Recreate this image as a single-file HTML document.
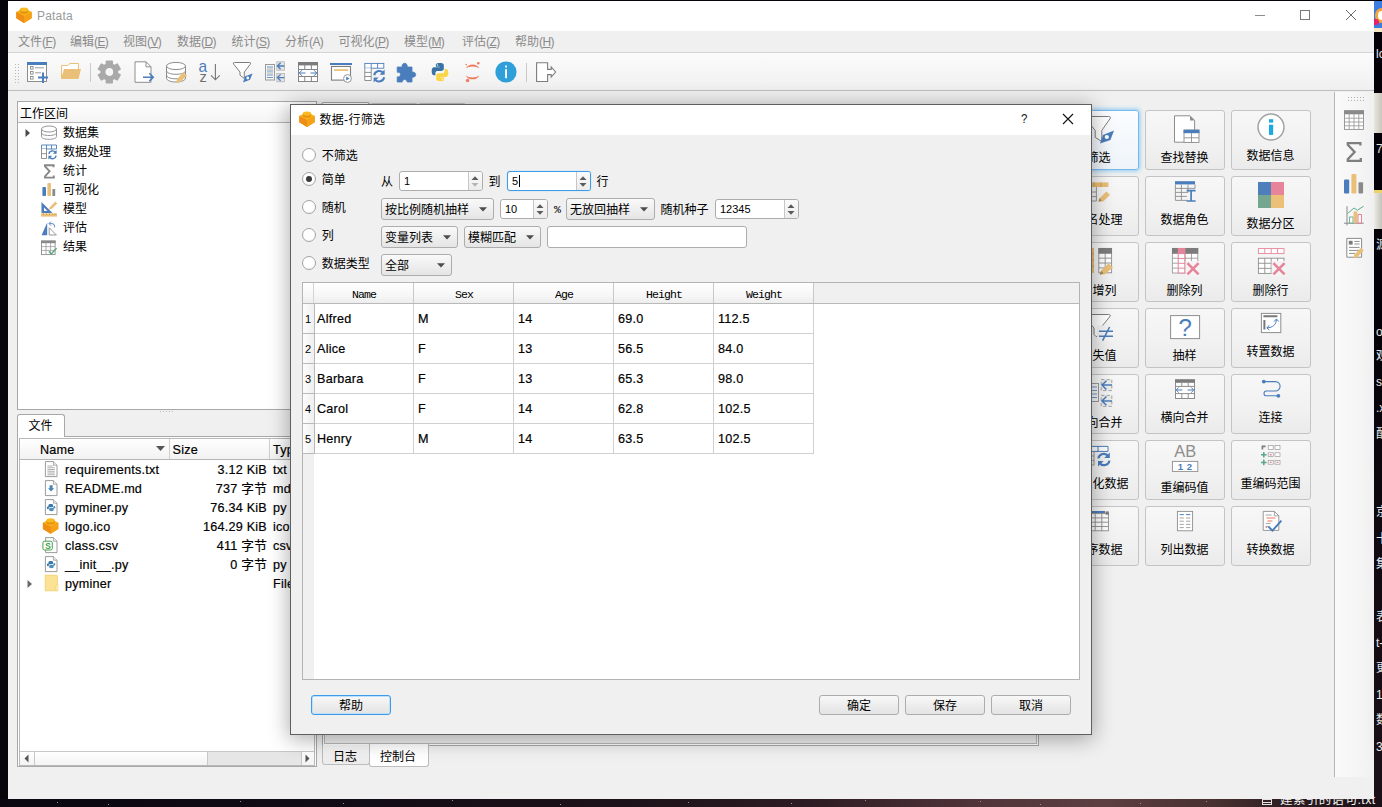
<!DOCTYPE html>
<html lang="zh"><head><meta charset="utf-8"><title>Patata</title>
<style>
html,body{margin:0;padding:0}
body{width:1382px;height:807px;overflow:hidden;position:relative;background:#07050c;
 font-family:"Liberation Sans","Noto Sans CJK SC",sans-serif;font-size:12px;color:#000}
div,span,svg{position:absolute;box-sizing:border-box}
.t{white-space:nowrap;line-height:16px;height:16px}
.m{font-family:"Liberation Serif","Noto Sans CJK SC",serif;letter-spacing:.6px}
.se{font-size:12.6px;letter-spacing:.25px;-webkit-text-stroke:.2px #000}
.d{font-size:11px}
.mo{font-family:"Liberation Mono",monospace;font-size:11.5px;letter-spacing:-.9px}
.btn{border:1px solid #adadad;border-radius:3px;background:linear-gradient(#f8f8f8,#ececec 55%,#e4e4e4)}
.cmb{border:1px solid #adadad;border-radius:3px;background:linear-gradient(#f9f9f9,#efefef 50%,#e5e5e5)}
.inp{border:1px solid #adadad;border-radius:3px;background:#fff}
.gb{border:1px solid #c4c4c4;border-radius:3px;background:linear-gradient(#f7f7f7,#f1f1f1 60%,#ebebeb)}
.gl{width:79px;text-align:center;left:-1px;font-size:12px;line-height:16px;height:16px;white-space:nowrap}
</style></head>
<body>
<div style="left:0px;top:799px;width:1382px;height:8px;background:linear-gradient(90deg,#0a0710,#120c16 25%,#1d1219 45%,#2c1b22 58%,#4e3338 70%,#5d3f42 80%,#47302f 88%,#2a1b20 94%,#1a1016)"></div>
<div style="left:452px;top:800px;width:1px;height:1px;background:#9a8fa8"></div>
<div style="left:343px;top:803px;width:1px;height:1px;background:#9a8fa8"></div>
<div style="left:108px;top:804px;width:1px;height:1px;background:#9a8fa8"></div>
<div style="left:688px;top:802px;width:1px;height:1px;background:#9a8fa8"></div>
<div style="left:791px;top:803px;width:1px;height:1px;background:#9a8fa8"></div>
<div style="left:980px;top:801px;width:1px;height:1px;background:#9a8fa8"></div>
<div style="left:1140px;top:803px;width:1px;height:1px;background:#9a8fa8"></div>
<div style="left:1206px;top:801px;width:1px;height:1px;background:#9a8fa8"></div>
<div style="left:57px;top:802px;width:1px;height:1px;background:#9a8fa8"></div>
<div style="left:240px;top:801px;width:1px;height:1px;background:#9a8fa8"></div>
<div style="left:560px;top:804px;width:1px;height:1px;background:#9a8fa8"></div>
<div style="left:865px;top:800px;width:1px;height:1px;background:#9a8fa8"></div>
<div style="left:1040px;top:804px;width:1px;height:1px;background:#9a8fa8"></div>
<div style="left:1374px;top:0px;width:8px;height:807px;background:linear-gradient(#040208,#040208 40%,#120a12 70%,#1c1018)"></div>
<div style="left:1374px;top:1px;width:8px;height:28px;background:#3c7ce0"></div>
<div style="left:1375px;top:8px;width:14px;height:15px;background:#fff;border:3px solid #f4a63a;border-radius:8px"></div>
<div style="left:1374px;top:19px;width:5px;height:6px;background:#e8206a;border-radius:0 3px 3px 0"></div>
<div style="left:1374px;top:28px;width:8px;height:4px;background:#f3e6c4"></div>
<div style="left:1374px;top:93px;width:8px;height:40px;background:linear-gradient(90deg,#e9e6dc,#c9c6bd)"></div>
<div style="left:1374px;top:190px;width:8px;height:39px;background:linear-gradient(90deg,#ecebe6,#c4c2bb);border-top:3px solid #ecd268"></div>
<span class="t" style="left:1376px;top:45.5px;color:#e8e8e8;font-size:12px">lc</span>
<span class="t" style="left:1376px;top:140.7px;color:#e8e8e8;font-size:12px">72</span>
<span class="t" style="left:1376px;top:236.6px;color:#e8e8e8;font-size:12px">源</span>
<span class="t" style="left:1376px;top:323.5px;color:#e8e8e8;font-size:12px">o.</span>
<span class="t" style="left:1376px;top:348px;color:#e8e8e8;font-size:12px">观</span>
<span class="t" style="left:1376px;top:374px;color:#e8e8e8;font-size:12px">sx</span>
<span class="t" style="left:1376px;top:400px;color:#e8e8e8;font-size:12px">.x</span>
<span class="t" style="left:1376px;top:426px;color:#e8e8e8;font-size:12px">配</span>
<span class="t" style="left:1376px;top:503.7px;color:#e8e8e8;font-size:12px">京</span>
<span class="t" style="left:1376px;top:530.5px;color:#e8e8e8;font-size:12px">十</span>
<span class="t" style="left:1376px;top:556px;color:#e8e8e8;font-size:12px">集</span>
<span class="t" style="left:1376px;top:608.8px;color:#e8e8e8;font-size:12px">表</span>
<span class="t" style="left:1376px;top:635px;color:#e8e8e8;font-size:12px">t-</span>
<span class="t" style="left:1376px;top:660px;color:#e8e8e8;font-size:12px">更</span>
<span class="t" style="left:1376px;top:687px;color:#e8e8e8;font-size:12px">16</span>
<span class="t" style="left:1376px;top:712px;color:#e8e8e8;font-size:12px">数</span>
<span class="t" style="left:1376px;top:738.5px;color:#e8e8e8;font-size:12px">31</span>
<div style="left:1262px;top:799px;width:10px;height:8px;overflow:hidden"><div style="left:0;top:-6px;width:10px;height:12px;border:1px solid #e4e4e4;border-top:0;background:repeating-linear-gradient(#e4e4e4 0 1px,transparent 1px 3px)"></div></div>
<span class="t" style="left:1280px;top:791.5px;color:#f2f2f2;font-size:12.5px;letter-spacing:.4px">建索引的语句.txt</span>
<div style="left:8px;top:1px;width:1366px;height:798px;background:#f0f0f0"></div>
<div style="left:8px;top:1px;width:1366px;height:30px;background:#fff"></div>
<svg style="left:16px;top:7px" width="16" height="16" viewBox="0 0 16 16"><path d="M8 1.4L15.7 5V11.3L8 15.9L0.3 11.3V5Z" fill="#f29a14"/><path d="M8 1.4L15.7 5L8 8.9L0.3 5Z" fill="#f7b51d"/><path d="M8 8.9L15.7 5V11.3L8 15.9Z" fill="#f5a216"/><path d="M8 8.9L0.3 5V11.3L8 15.9Z" fill="#ee8e14"/><path d="M3.8 2.5V4.7A4.2 2 0 0 0 12.2 4.7V2.5Z" fill="#e9940f"/><ellipse cx="8" cy="2.5" rx="4.2" ry="2" fill="#f8bb22"/></svg>
<span class="t" style="left:37px;top:8px;color:#9a9a9a;font-size:12px;letter-spacing:.2px">Patata</span>
<div style="left:1255px;top:15px;width:10px;height:1px;background:#8c8c8c"></div>
<div style="left:1300px;top:10px;width:10px;height:10px;border:1px solid #7a7a7a"></div>
<svg style="left:1345px;top:9px" width="12" height="12" viewBox="0 0 12 12"><path d="M1 1L11 11M11 1L1 11" stroke="#6a6a6a" stroke-width="1" fill="none"/></svg><div style="left:8px;top:31px;width:1366px;height:21px;background:#f0f0f0"></div>
<div style="left:8px;top:52px;width:1366px;height:1px;background:#d4d4d4"></div>
<span class="t" style="left:18px;top:34px;color:#8a8a8a;font-size:12px">文件<span style="position:static;font-size:12px;letter-spacing:-.6px">(<u>F</u>)</span></span>
<span class="t" style="left:70px;top:34px;color:#8a8a8a;font-size:12px">编辑<span style="position:static;font-size:12px;letter-spacing:-.6px">(<u>E</u>)</span></span>
<span class="t" style="left:123px;top:34px;color:#8a8a8a;font-size:12px">视图<span style="position:static;font-size:12px;letter-spacing:-.6px">(<u>V</u>)</span></span>
<span class="t" style="left:177px;top:34px;color:#8a8a8a;font-size:12px">数据<span style="position:static;font-size:12px;letter-spacing:-.6px">(<u>D</u>)</span></span>
<span class="t" style="left:231.5px;top:34px;color:#8a8a8a;font-size:12px">统计<span style="position:static;font-size:12px;letter-spacing:-.6px">(<u>S</u>)</span></span>
<span class="t" style="left:285px;top:34px;color:#8a8a8a;font-size:12px">分析<span style="position:static;font-size:12px;letter-spacing:-.6px">(A)</span></span>
<span class="t" style="left:338.5px;top:34px;color:#8a8a8a;font-size:12px">可视化<span style="position:static;font-size:12px;letter-spacing:-.6px">(<u>P</u>)</span></span>
<span class="t" style="left:404px;top:34px;color:#8a8a8a;font-size:12px">模型<span style="position:static;font-size:12px;letter-spacing:-.6px">(<u>M</u>)</span></span>
<span class="t" style="left:462px;top:34px;color:#8a8a8a;font-size:12px">评估<span style="position:static;font-size:12px;letter-spacing:-.6px">(<u>Z</u>)</span></span>
<span class="t" style="left:515px;top:34px;color:#8a8a8a;font-size:12px">帮助<span style="position:static;font-size:12px;letter-spacing:-.6px">(<u>H</u>)</span></span>
<div style="left:8px;top:53px;width:1366px;height:37px;background:linear-gradient(#fbfbfb,#f6f6f6 50%,#efefef)"></div>
<div style="left:8px;top:90px;width:1366px;height:1px;background:#bdbdbd"></div>
<div style="left:14px;top:63px;width:5px;height:20px;background-image:radial-gradient(circle,#b8b8b8 0.7px,transparent 0.9px);background-size:3px 3px"></div>
<div style="left:90px;top:63px;width:1px;height:19px;background:#c9c9c9"></div>
<div style="left:526px;top:63px;width:1px;height:19px;background:#c9c9c9"></div>
<svg style="left:0;top:53px" width="600" height="37" viewBox="0 53 600 37"><rect x="27.5" y="62.5" width="19" height="19" fill="#fff" stroke="#8c8c8c"/><rect x="27" y="62" width="20" height="3" fill="#4a7dbb"/><rect x="30.5" y="66.5" width="2.6" height="2.6" fill="none" stroke="#8c8c8c" stroke-width=".9"/><rect x="30.5" y="71.5" width="2.6" height="2.6" fill="none" stroke="#8c8c8c" stroke-width=".9"/><rect x="30.5" y="76.5" width="2.6" height="2.6" fill="none" stroke="#8c8c8c" stroke-width=".9"/><path d="M35 67.8H44M35 72.8H41" stroke="#9a9a9a" stroke-width="1"/><path d="M38 77.5H48M43 72.5V83" stroke="#4a7dbb" stroke-width="2"/><path d="M61.5 78.5V65.5H67.5L70 63.5H78.5V69" fill="#fff" stroke="#eabf78" stroke-width="1"/><path d="M61 79L64 69H81L78.5 79Z" fill="#eabf78"/><path d="M106.41 64.33L106.42 61.18L112.18 61.18L112.19 64.33L114.50 65.66L117.23 64.09L120.11 69.08L117.39 70.66L117.39 73.34L120.11 74.92L117.23 79.91L114.50 78.34L112.19 79.67L112.18 82.82L106.42 82.82L106.41 79.67L104.10 78.34L101.37 79.91L98.49 74.92L101.21 73.34L101.21 70.66L98.49 69.08L101.37 64.09L104.10 65.66ZM114.0 72A4.7 4.7 0 1 0 104.6 72A4.7 4.7 0 1 0 114.0 72Z" fill="#a9a9a9" fill-rule="evenodd" stroke="#a9a9a9" stroke-width="1.6" stroke-linejoin="round"/><path d="M135 61.8H146L151 66.8V82.3H135Z" fill="#fff" stroke="#8e8e8e" stroke-width="1"/><path d="M146 61.8V66.8H151" fill="none" stroke="#8e8e8e"/><path d="M143 77.2H153M149.3 73.3L153.3 77.2L149.3 81.1" fill="none" stroke="#4a7dbb" stroke-width="1.5"/><path d="M166.5 66V78C166.5 80.5 171 82 176 82S185.5 80.5 185.5 78V66" fill="#fff" stroke="#8c8c8c"/><ellipse cx="176" cy="66" rx="9.5" ry="3.6" fill="#fff" stroke="#8c8c8c"/><path d="M166.5 70.5C166.5 73 171 74.3 176 74.3S185.5 73 185.5 70.5M166.5 75C166.5 77.5 171 78.8 176 78.8S185.5 77.5 185.5 75" fill="none" stroke="#8c8c8c"/><path d="M176.2 82.8L177.2 78.8L183.6 72.2L187 75.6L180.4 82Z" fill="#eabf78"/><text x="198.4" y="71.7" font-family="Liberation Sans,sans-serif" font-size="17" textLength="8.6" lengthAdjust="spacingAndGlyphs" fill="#4a7dbb">a</text><text x="199.4" y="81.9" font-family="Liberation Sans,sans-serif" font-size="14.6" fill="#6f6f6f">z</text><path d="M215.4 64V79.6M211 75.4L215.4 79.8L219.8 75.4" fill="none" stroke="#767676" stroke-width="1.1"/><path d="M234.5 62.5H249.5Q251.5 62.5 250.2 64.3L244.3 72V78.5L240 75.2V72L233.8 64.3Q232.5 62.5 234.5 62.5Z" fill="#fff" stroke="#7d7d7d" stroke-width="1"/><path d="M243 82.4L245.2 76.2L252.6 73.4L250 79.8Z" fill="#4a7dbb"/><circle cx="247.8" cy="78" r="1.4" fill="#fff"/><rect x="265.5" y="64.5" width="9" height="15.5" fill="#f4f4f4" stroke="#9a9a9a"/><path d="M267 67H273M267 71H273M267 75H273M267 77.5H273" stroke="#6f97c8" stroke-width="1"/><path d="M267 69H273M267 73H273" stroke="#b0b0b0"/><rect x="276.8" y="61.8" width="7.8" height="8.4" fill="#e4e4e4" stroke="#b5b5b5" stroke-width=".8"/><path d="M277.4 66.0H284.4M280.6 62.8L277.4 66.0L280.6 69.2" fill="none" stroke="#4a7dbb" stroke-width="1.3"/><rect x="276.8" y="73.4" width="7.8" height="8.4" fill="#e4e4e4" stroke="#b5b5b5" stroke-width=".8"/><path d="M277.4 77.60000000000001H284.4M280.6 74.4L277.4 77.60000000000001L280.6 80.80000000000001" fill="none" stroke="#4a7dbb" stroke-width="1.3"/><rect x="298.5" y="62.5" width="19" height="19" fill="#fff" stroke="#858585"/><rect x="298" y="62" width="20" height="3.4" fill="#7c7c7c"/><path d="M298.5 69.5H317.5M298.5 76.5H317.5M304.8 65V69.5M311.4 65V69.5M304.8 76.5V81.5M311.4 76.5V81.5" stroke="#858585" fill="none"/><rect x="299" y="70" width="18" height="6" fill="#fff"/><path d="M299.3 73H305.5M310.5 73H316.8M302 70.2L299.2 73L302 75.8M314 70.2L316.8 73L314 75.8" fill="none" stroke="#4a7dbb" stroke-width="1"/><rect x="331.5" y="66.5" width="19" height="13.6" fill="#fff" stroke="#7f7f7f" stroke-width="1.1"/><rect x="330" y="63" width="22" height="2" fill="#4a7dbb"/><rect x="334" y="69.2" width="14.2" height="1.7" fill="#eabf78"/><circle cx="347.5" cy="78.5" r="3.9" fill="#fff" stroke="#8a8a8a" stroke-width=".9"/><path d="M346.2 76.4V80.6L349.6 78.5Z" fill="#4a7dbb"/><rect x="364.8" y="63.4" width="19" height="4.8" fill="#fff" stroke="#4a7dbb" stroke-width=".9"/><path d="M371.2 63.4V68.2M377.6 63.4V68.2" stroke="#4a7dbb" stroke-width=".9"/><path d="M364.8 68.2V80.5H371.2V68.2M364.8 72.4H371.2M364.8 76.5H371.2" fill="#fff" stroke="#858585" stroke-width=".9"/><path d="M374.2 75.2A5.2 5.2 0 0 1 383.6 73.2" fill="none" stroke="#4a7dbb" stroke-width="2"/><path d="M384.6 69.6V74.8H379.6Z" fill="#4a7dbb"/><path d="M384.2 77.2A5.2 5.2 0 0 1 374.8 79.2" fill="none" stroke="#4a7dbb" stroke-width="2"/><path d="M373.6 82.6V77.4H378.6Z" fill="#4a7dbb"/><path d="M397.2 67H402.3A2.6 2.6 0 1 1 407 67H412V72.3A2.6 2.6 0 1 1 412 77V82H407.2A2.5 2.5 0 1 0 402.2 82H397.2V76.8A2.4 2.4 0 1 0 397.2 72.3Z" fill="#4a7dbb" stroke="#4a7dbb" stroke-width=".8" stroke-linejoin="round"/><path d="M439.7 63C435.6 63 435.9 64.8 435.9 64.8V66.7H439.8V67.3H434.3S431.7 67 431.7 71.2S434 75.2 434 75.2H435.4V73.2S435.3 70.9 437.7 70.9H441.6S443.8 70.9 443.8 68.8V65.2S444.1 63 439.7 63Z" fill="#3873a3"/><circle cx="437.5" cy="64.9" r=".75" fill="#dfe8f0"/><path d="M440.3 81.2C444.4 81.2 444.1 79.4 444.1 79.4V77.5H440.2V76.9H445.7S448.3 77.2 448.3 73S446 69 446 69H444.6V71S444.7 73.3 442.3 73.3H438.4S436.2 73.3 436.2 75.4V79S435.9 81.2 440.3 81.2Z" fill="#fbd548"/><circle cx="442.5" cy="79.3" r=".75" fill="#fdf3c8"/><path d="M465.8 68.4C467.2 65.9 469.8 64.6 472.6 64.6S478 65.9 479.4 68.4C477.8 67.1 475.3 66.4 472.6 66.4S467.4 67.1 465.8 68.4Z" fill="#ee7b5c"/><path d="M465.8 75.4C467.2 77.9 469.8 79.3 472.6 79.3S478 77.9 479.4 75.4C477.8 76.7 475.3 77.4 472.6 77.4S467.4 76.7 465.8 75.4Z" fill="#ee7b5c"/><circle cx="478.3" cy="63.2" r="1.3" fill="#ee7b5c"/><circle cx="467.6" cy="80.5" r="1.7" fill="#ee7b5c"/><circle cx="466.2" cy="64.6" r=".8" fill="#ee7b5c"/><circle cx="506" cy="72" r="10.6" fill="#2e9fd8"/><rect x="505.1" y="69.2" width="1.9" height="9" fill="#fff"/><rect x="505.1" y="65.5" width="1.9" height="2" fill="#fff"/><path d="M536.6 62.7H547.6V69.4H551.2V67L555.6 72L551.2 77V74.6H547.6V81.5H536.6Z" fill="#fff" stroke="#7d7d7d" stroke-width="1.1" stroke-linejoin="miter"/></svg>
<div style="left:17px;top:101px;width:300px;height:309px;background:#fff;border:1px solid #a8a8a8"></div>
<div style="left:18px;top:102px;width:298px;height:21px;background:linear-gradient(#fff,#f4f4f4);border-bottom:1px solid #b5b5b5"></div>
<span class="t" style="left:20px;top:106px;font-size:12px">工作区间</span>
<span class="t" style="left:63px;top:125px;">数据集</span>
<span class="t" style="left:63px;top:144px;">数据处理</span>
<span class="t" style="left:63px;top:163px;">统计</span>
<span class="t" style="left:63px;top:182px;">可视化</span>
<span class="t" style="left:63px;top:201px;">模型</span>
<span class="t" style="left:63px;top:220px;">评估</span>
<span class="t" style="left:63px;top:239px;">结果</span>
<svg style="left:25px;top:128px" width="6" height="10" viewBox="0 0 6 10"><path d="M0.5 1L5 5L0.5 9Z" fill="#4a4a4a"/></svg><svg style="left:36px;top:123px" width="26" height="136" viewBox="36 122 26 136"><path d="M41.5 128V135.6C41.5 137.3 44.8 138.3 49 138.3S56.5 137.3 56.5 135.6V128" fill="#fff" stroke="#8a8a8a" stroke-width=".9"/><ellipse cx="49" cy="128" rx="7.5" ry="3" fill="#fff" stroke="#8a8a8a" stroke-width=".9"/><path d="M41.5 131.8C41.5 133.5 44.8 134.5 49 134.5S56.5 133.5 56.5 131.8" fill="none" stroke="#8a8a8a" stroke-width=".9"/><path d="M41.5 144H56.5V148H41.5ZM46.5 144V148M51.5 144V148" fill="#fff" stroke="#4a7dbb" stroke-width=".9"/><path d="M41.5 148V157.5H46.5V148M41.5 152.7H46.5" fill="#fff" stroke="#858585" stroke-width=".9"/><path d="M48.8 153A3.8 3.8 0 0 1 55.6 151.4" fill="none" stroke="#4a7dbb" stroke-width="1.4"/><path d="M56.6 149V152.8H52.8Z" fill="#4a7dbb"/><path d="M56.2 154.6A3.8 3.8 0 0 1 49.4 156.2" fill="none" stroke="#4a7dbb" stroke-width="1.4"/><path d="M48.4 158.6V154.8H52.2Z" fill="#4a7dbb"/><path d="M53.6 166.2V164.2H45V165.4L49.6 170.3L45 175.3V176.6H53.8V174.4" fill="none" stroke="#888" stroke-width="1.9" stroke-linejoin="miter"/><rect x="42.4" y="186" width="3.6" height="9" rx=".8" fill="#4a7dbb"/><rect x="47.4" y="182" width="3.6" height="13" rx=".8" fill="#eabf78"/><rect x="52.4" y="188" width="2.8" height="7" rx=".6" fill="#8a8a8a"/><path d="M41.5 201V212H52.5Z" fill="#4a7dbb"/><path d="M44 206.5V210H47.5Z" fill="#fff"/><path d="M49 208.6L49.8 206.2L55.4 200.6L57.2 202.4L51.6 208Z" fill="#eabf78"/><rect x="41" y="212.4" width="16" height="3.2" fill="#eabf78"/><path d="M43.5 212.4V214M46.5 212.4V214M49.5 212.4V214M52.5 212.4V214M55 212.4V214" stroke="#c89a4e" stroke-width=".7"/><path d="M47.2 221.4V234.2H41.6Z" fill="#4a7dbb"/><path d="M49.2 226.8V234H56.4Z" fill="#fff" stroke="#8d8d8d" stroke-width=".9"/><path d="M49.4 222.6H52A2.6 2.6 0 0 1 54.6 225.2V226.4" fill="none" stroke="#4a7dbb" stroke-width=".9"/><path d="M51 220.6L49 222.6L51 224.6" fill="none" stroke="#4a7dbb" stroke-width=".9"/><rect x="41.5" y="240" width="13.6" height="13.6" fill="#fff" stroke="#8d8d8d" stroke-width=".9"/><rect x="41" y="239.6" width="14.6" height="2.6" fill="#8a8a8a"/><path d="M41.5 245.6H55M41.5 249.4H55M46 242V253.5M50.6 242V253.5" stroke="#9a9a9a" stroke-width=".8"/><path d="M48.8 250.4L51.2 253L56.6 247.2" fill="none" stroke="#57a77e" stroke-width="1.4"/></svg>
<div style="left:160px;top:411px;width:15px;height:1px;background-image:linear-gradient(90deg,#bbb 1px,transparent 1px);background-size:3px 1px"></div>
<div style="left:17px;top:436px;width:300px;height:331px;background:#fff;border:1px solid #a8a8a8"></div>
<div style="left:17px;top:414px;width:48px;height:23px;background:#fff;border:1px solid #a8a8a8;border-bottom:0;border-radius:3px 3px 0 0"></div>
<span class="t" style="left:28.5px;top:418px;font-size:12px">文件</span>
<div style="left:19px;top:438px;width:296px;height:328px;background:#fff;border:1px solid #b9b9b9"></div>
<div style="left:20px;top:439px;width:294px;height:21px;background:linear-gradient(#fff,#f2f2f2);border-bottom:1px solid #b5b5b5"></div>
<div style="left:169px;top:439px;width:1px;height:20px;background:#d0d0d0"></div>
<div style="left:269px;top:439px;width:1px;height:20px;background:#d0d0d0"></div>
<span class="t se" style="left:40px;top:442px;">Name</span>
<span class="t se" style="left:172.5px;top:442px;">Size</span>
<span class="t se" style="left:273px;top:442px;">Type</span>
<svg style="left:156px;top:446px" width="9" height="5" viewBox="0 0 9 5"><path d="M0 0H9L4.5 5Z" fill="#555"/></svg><span class="t se" style="left:65px;top:462.0px;">requirements.txt</span>
<span class="t se" style="left:170px;top:462.0px;width:97px;text-align:right">3.12 KiB</span>
<span class="t se" style="left:273px;top:462.0px;">txt</span>
<span class="t se" style="left:65px;top:481.0px;">README.md</span>
<span class="t se" style="left:170px;top:481.0px;width:97px;text-align:right">737 字节</span>
<span class="t se" style="left:273px;top:481.0px;">md</span>
<span class="t se" style="left:65px;top:500.0px;">pyminer.py</span>
<span class="t se" style="left:170px;top:500.0px;width:97px;text-align:right">76.34 KiB</span>
<span class="t se" style="left:273px;top:500.0px;">py</span>
<span class="t se" style="left:65px;top:519.0px;">logo.ico</span>
<span class="t se" style="left:170px;top:519.0px;width:97px;text-align:right">164.29 KiB</span>
<span class="t se" style="left:273px;top:519.0px;">ico</span>
<span class="t se" style="left:65px;top:538.0px;">class.csv</span>
<span class="t se" style="left:170px;top:538.0px;width:97px;text-align:right">411 字节</span>
<span class="t se" style="left:273px;top:538.0px;">csv</span>
<span class="t se" style="left:65px;top:557.0px;">__init__.py</span>
<span class="t se" style="left:170px;top:557.0px;width:97px;text-align:right">0 字节</span>
<span class="t se" style="left:273px;top:557.0px;">py</span>
<span class="t se" style="left:65px;top:576.0px;">pyminer</span>
<span class="t se" style="left:273px;top:576.0px;">File Folder</span>
<svg style="left:27px;top:579px" width="6" height="10" viewBox="0 0 6 10"><path d="M0.5 1L5 5L0.5 9Z" fill="#6a6a6a"/></svg><svg style="left:40px;top:458px" width="22" height="136" viewBox="40 458 22 136"><path d="M45.4 461.6H53.4L57.0 465.20000000000005V476.6H45.4Z" fill="#fff" stroke="#8f8f8f" stroke-width=".9"/><path d="M53.4 461.6V465.20000000000005H57.0" fill="#eee" stroke="#8f8f8f" stroke-width=".7"/><path d="M47.4 466.0H52.6 " stroke="#9a9a9a" stroke-width=".8"/><path d="M47.4 467.75H54.8 " stroke="#9a9a9a" stroke-width=".8"/><path d="M47.4 469.5H54.8 " stroke="#9a9a9a" stroke-width=".8"/><path d="M47.4 471.25H54.8 " stroke="#9a9a9a" stroke-width=".8"/><path d="M47.4 473.0H54.8 " stroke="#9a9a9a" stroke-width=".8"/><path d="M47.4 474.75H54.8 " stroke="#9a9a9a" stroke-width=".8"/><path d="M45.4 480.6H53.4L57.0 484.20000000000005V495.6H45.4Z" fill="#fff" stroke="#8f8f8f" stroke-width=".9"/><path d="M53.4 480.6V484.20000000000005H57.0" fill="#eee" stroke="#8f8f8f" stroke-width=".7"/><path d="M49.6 485.20000000000005H52.6V488.20000000000005H54.2L51.1 491.6L48 488.20000000000005H49.6Z" fill="#4785bd"/><path d="M45.4 499.6H53.4L57.0 503.20000000000005V514.6H45.4Z" fill="#fff" stroke="#8f8f8f" stroke-width=".9"/><path d="M53.4 499.6V503.20000000000005H57.0" fill="#eee" stroke="#8f8f8f" stroke-width=".7"/><path d="M50.7 504.0C48.1 504.0 48.5 505.20000000000005 48.5 506.6H47.7C46.5 506.6 46.5 509.20000000000005 47.9 509.20000000000005H48.7V508.20000000000005C48.7 507.20000000000005 49.5 507.20000000000005 50.1 507.20000000000005H52.1C53.1 507.20000000000005 53.1 506.40000000000003 53.1 505.6C53.1 504.40000000000003 52.5 504.0 50.7 504.0Z" fill="#3b78a8"/><path d="M51.5 511.20000000000005C54.1 511.20000000000005 53.7 510.0 53.7 508.6H54.5C55.7 508.6 55.7 506.0 54.300000000000004 506.0H53.5V507.0C53.5 508.0 52.7 508.0 52.1 508.0H50.1C49.1 508.0 49.1 508.8 49.1 509.6C49.1 510.8 49.7 511.20000000000005 51.5 511.20000000000005Z" fill="#4f8fbd"/><g transform="translate(42.6,517.8)"><path d="M8 1.4L15.7 5V11.3L8 15.9L0.3 11.3V5Z" fill="#f29a14"/><path d="M8 1.4L15.7 5L8 8.9L0.3 5Z" fill="#f7b51d"/><path d="M8 8.9L15.7 5V11.3L8 15.9Z" fill="#f5a216"/><path d="M8 8.9L0.3 5V11.3L8 15.9Z" fill="#ee8e14"/><path d="M3.8 2.5V4.7A4.2 2 0 0 0 12.2 4.7V2.5Z" fill="#e9940f"/><ellipse cx="8" cy="2.5" rx="4.2" ry="2" fill="#f8bb22"/></g><path d="M45.6 537.6H53.4L57.0 541.2V552.6H45.6Z" fill="#fff" stroke="#8f8f8f" stroke-width=".9"/><path d="M53.4 537.6V541.2H57.0" fill="#eee" stroke="#8f8f8f" stroke-width=".7"/><rect x="42.9" y="541.2" width="9.4" height="8.8" rx="1.6" fill="#fff" stroke="#43a047" stroke-width="1"/><text x="45.2" y="548.6" font-family="Liberation Sans,sans-serif" font-size="8.4" font-weight="bold" fill="#43a047">S</text><path d="M45.4 556.6H53.4L57.0 560.2V571.6H45.4Z" fill="#fff" stroke="#8f8f8f" stroke-width=".9"/><path d="M53.4 556.6V560.2H57.0" fill="#eee" stroke="#8f8f8f" stroke-width=".7"/><path d="M50.7 561.0C48.1 561.0 48.5 562.2 48.5 563.6H47.7C46.5 563.6 46.5 566.2 47.9 566.2H48.7V565.2C48.7 564.2 49.5 564.2 50.1 564.2H52.1C53.1 564.2 53.1 563.4 53.1 562.6C53.1 561.4 52.5 561.0 50.7 561.0Z" fill="#3b78a8"/><path d="M51.5 568.2C54.1 568.2 53.7 567.0 53.7 565.6H54.5C55.7 565.6 55.7 563.0 54.300000000000004 563.0H53.5V564.0C53.5 565.0 52.7 565.0 52.1 565.0H50.1C49.1 565.0 49.1 565.8000000000001 49.1 566.6C49.1 567.8000000000001 49.7 568.2 51.5 568.2Z" fill="#4f8fbd"/><path d="M45.2 575.2H56.6Q57.4 575.2 57.4 576V590.8H45.2Z" fill="#fbe294" stroke="#efc95c" stroke-width=".7"/><path d="M56 590.8V585.6L58 584.6V590.8Z" fill="#fdf2c8" stroke="#f0cf6a" stroke-width=".6"/></svg>
<div style="left:20px;top:751px;width:294px;height:14px;background:#e6e6e6;border-top:1px solid #c8c8c8"></div>
<div style="left:34px;top:752px;width:174px;height:13px;background:linear-gradient(#fff,#f3f3f3);border-left:1px solid #c8c8c8;border-right:1px solid #c8c8c8"></div>
<div style="left:20px;top:752px;width:14px;height:13px;background:linear-gradient(#fff,#f3f3f3)"></div>
<div style="left:301px;top:752px;width:13px;height:13px;background:linear-gradient(#fff,#f3f3f3);border-left:1px solid #c8c8c8"></div>
<svg style="left:24px;top:754px" width="5" height="9" viewBox="0 0 5 9"><path d="M4.5 0.5V8.5L0.5 4.5Z" fill="#555"/></svg><svg style="left:305px;top:754px" width="5" height="9" viewBox="0 0 5 9"><path d="M0.5 0.5V8.5L4.5 4.5Z" fill="#555"/></svg><div style="left:321px;top:102px;width:49px;height:22px;background:#fff;border:1px solid #a8a8a8;border-bottom:0;border-radius:3px 3px 0 0"></div>
<div style="left:370px;top:103px;width:48px;height:21px;background:#f4f4f4;border:1px solid #c4c4c4;border-bottom:0;border-radius:3px 3px 0 0"></div>
<div style="left:418px;top:103px;width:48px;height:21px;background:#f4f4f4;border:1px solid #c4c4c4;border-bottom:0;border-radius:3px 3px 0 0"></div>
<div style="left:322px;top:123px;width:717px;height:623px;background:#fff;border:1px solid #a8a8a8"></div>
<div style="left:324px;top:125px;width:713px;height:619px;background:#f0f0f0;border:1px solid #b9b9b9"></div>
<div style="left:322px;top:745px;width:48px;height:20px;background:linear-gradient(#f6f6f6,#ececec);border:1px solid #bdbdbd;border-top:0;border-radius:0 0 3px 3px"></div>
<div style="left:369px;top:744px;width:60px;height:23px;background:#fff;border:1px solid #bdbdbd;border-top:0;border-radius:0 0 3px 3px"></div>
<span class="t" style="left:333px;top:748.5px;font-size:12px">日志</span>
<span class="t" style="left:380px;top:749px;font-size:12px">控制台</span>
<div style="left:1335px;top:92px;width:39px;height:685px;background:linear-gradient(90deg,#fafafa,#f6f6f6 50%,#f0f0f0)"></div>
<div style="left:1334px;top:92px;width:1px;height:685px;background:#b4b4b4"></div>
<div style="left:1347px;top:96px;width:18px;height:6px;background-image:radial-gradient(circle,#b0b0b0 0.7px,transparent 0.9px);background-size:3px 3px"></div>
<svg style="left:1338px;top:104px" width="34" height="160" viewBox="1338 104 34 160"><rect x="1344.5" y="110.8" width="19" height="18.6" fill="#fff" stroke="#909090" stroke-width=".9"/><rect x="1344" y="110.3" width="20" height="4" fill="#8a8a8a"/><path d="M1344.5 118.2H1363.5M1344.5 122H1363.5M1344.5 125.8H1363.5M1349.2 114V129.4M1354 114V129.4M1358.8 114V129.4" stroke="#9d9d9d" stroke-width=".9"/><path d="M1360.4 145.6V143.2H1347.8V144.8L1354.6 152L1347.8 159.2V160.8H1360.8V158" fill="none" stroke="#7f7f7f" stroke-width="2.3" stroke-linejoin="miter"/><rect x="1344" y="179.4" width="5.2" height="14.2" rx="1" fill="#4a7dbb"/><rect x="1351.4" y="174" width="5" height="19.6" rx="1" fill="#eabf78"/><rect x="1358.5" y="182.3" width="4.6" height="11.3" rx="1" fill="#8a8a8a"/><path d="M1347 206.2V225.4M1344 223.2H1363.7" stroke="#8a8a8a" stroke-width="1"/><rect x="1349.6" y="217" width="3.4" height="6" fill="#fff" stroke="#5fae8c" stroke-width=".9"/><rect x="1353.6" y="211.4" width="3.6" height="11.6" fill="#eabf78"/><rect x="1358" y="214.6" width="3.4" height="8.4" fill="#fff" stroke="#e8708a" stroke-width=".9"/><path d="M1347.4 213.6L1354 208L1357.4 210.2L1363.6 206.2" fill="none" stroke="#5fae8c" stroke-width="1"/><path d="M1346.8 238.4H1361.6V257.2H1346.8Z" fill="#fff" stroke="#8a8a8a" stroke-width="1"/><rect x="1348.8" y="240.8" width="3.8" height="3.8" fill="#7a7a7a"/><path d="M1354.4 241.4H1359.6M1354.4 244H1359.6M1349 247.4H1359.6M1349 250.4H1359.6M1349 253.4H1355" stroke="#8f8f8f" stroke-width="1"/><path d="M1353.4 258.2L1354.4 254.4L1361 247.8L1363.8 250.6L1357.2 257.2Z" fill="#eabf78"/></svg>
<div class="gb" style="left:1059px;top:110px;width:80px;height:60px;border-color:#7ab8ea;box-shadow:0 0 4px 1px #8ccaf7;background:linear-gradient(#fbfdff,#eef4fa)"><span class="gl" style="top:39.3px">筛选</span></div>
<div class="gb" style="left:1145px;top:110px;width:80px;height:60px;"><span class="gl" style="top:39.3px">查找替换</span></div>
<div class="gb" style="left:1231px;top:110px;width:80px;height:60px;"><span class="gl" style="top:37.3px">数据信息</span></div>
<div class="gb" style="left:1059px;top:176px;width:80px;height:60px;"><span class="gl" style="top:35.0px">列名处理</span></div>
<div class="gb" style="left:1145px;top:176px;width:80px;height:60px;"><span class="gl" style="top:35.0px">数据角色</span></div>
<div class="gb" style="left:1231px;top:176px;width:80px;height:60px;"><span class="gl" style="top:39.0px">数据分区</span></div>
<div class="gb" style="left:1059px;top:242px;width:80px;height:60px;"><span class="gl" style="top:39.5px">新增列</span></div>
<div class="gb" style="left:1145px;top:242px;width:80px;height:60px;"><span class="gl" style="top:39.5px">删除列</span></div>
<div class="gb" style="left:1231px;top:242px;width:80px;height:60px;"><span class="gl" style="top:39.5px">删除行</span></div>
<div class="gb" style="left:1059px;top:308px;width:80px;height:60px;"><span class="gl" style="top:39.0px">缺失值</span></div>
<div class="gb" style="left:1145px;top:308px;width:80px;height:60px;"><span class="gl" style="top:39.0px">抽样</span></div>
<div class="gb" style="left:1231px;top:308px;width:80px;height:60px;"><span class="gl" style="top:35.3px">转置数据</span></div>
<div class="gb" style="left:1059px;top:374px;width:80px;height:60px;"><span class="gl" style="top:39.5px">纵向合并</span></div>
<div class="gb" style="left:1145px;top:374px;width:80px;height:60px;"><span class="gl" style="top:35.3px">横向合并</span></div>
<div class="gb" style="left:1231px;top:374px;width:80px;height:60px;"><span class="gl" style="top:35.3px">连接</span></div>
<div class="gb" style="left:1059px;top:440px;width:80px;height:60px;"><span class="gl" style="top:35.3px">标准化数据</span></div>
<div class="gb" style="left:1145px;top:440px;width:80px;height:60px;"><span class="gl" style="top:39.3px">重编码值</span></div>
<div class="gb" style="left:1231px;top:440px;width:80px;height:60px;"><span class="gl" style="top:35.3px">重编码范围</span></div>
<div class="gb" style="left:1059px;top:506px;width:80px;height:60px;"><span class="gl" style="top:35.0px">排序数据</span></div>
<div class="gb" style="left:1145px;top:506px;width:80px;height:60px;"><span class="gl" style="top:35.0px">列出数据</span></div>
<div class="gb" style="left:1231px;top:506px;width:80px;height:60px;"><span class="gl" style="top:35.0px">转换数据</span></div>
<svg style="left:1059px;top:110px" width="252" height="456" viewBox="1059 110 252 456"><path d="M1084.2 116.5H1108.6Q1111.6 116.5 1109.8 119L1101.8 130.4V141.5L1095.2 137.3V130.4L1085.7 119Q1083.7 116.5 1086.2 116.5Z" fill="#fff" stroke="#7d7d7d" stroke-width="1"/><path d="M1100 143.6L1103 135L1114 130.4L1110.4 140Z" fill="#4a7dbb"/><circle cx="1106.8" cy="137" r="2.1" fill="#fff"/><path d="M1174.5 115.8H1190L1194.6 120.4V142.2H1174.5Z" fill="#fff" stroke="#8d8d8d" stroke-width="1"/><path d="M1190 115.8V120.4H1194.6Z" fill="#8d8d8d"/><rect x="1184" y="130" width="15" height="12.4" fill="#fff" stroke="#8d8d8d" stroke-width=".9"/><rect x="1183.6" y="129.8" width="15.8" height="3.4" fill="#4a7dbb"/><path d="M1191.5 133V142.4M1184 137.8H1199" stroke="#8d8d8d" stroke-width=".9"/><circle cx="1271" cy="127.1" r="13" fill="#fff" stroke="#a3a3a3" stroke-width="1.5"/><rect x="1269" y="119.2" width="4.2" height="3.4" fill="#1ca8e3"/><rect x="1269" y="124.7" width="4.2" height="10.2" fill="#1ca8e3"/><rect x="1080" y="182.4" width="28.4" height="4.6" fill="#eabf78"/><path d="M1087 182.4V187M1094 182.4V187M1101 182.4V187" stroke="#c89a4e" stroke-width=".8"/><path d="M1080.4 187V201H1096.4V187M1080.4 192H1096.4M1080.4 196.6H1096.4M1088.4 187V201" fill="none" stroke="#8d8d8d" stroke-width=".9"/><path d="M1098.4 201.8L1099.6 198.2L1106.4 191.4L1110 195L1103.2 201.4Z" fill="#eabf78"/><path d="M1098.4 201.8L1099.6 198.2L1101.8 200.6Z" fill="#9b8a6a"/><rect x="1175" y="181.2" width="20" height="3.2" fill="#4a7dbb"/><path d="M1175.4 184.4V200.4H1187M1175.4 188.4H1195M1175.4 192.4H1188M1175.4 196.4H1187M1181.4 184.4V200.4M1188 184.4V192.4M1195 184.4V188.4" fill="none" stroke="#8d8d8d" stroke-width=".9"/><path d="M1186.6 190.6H1195.6M1186.6 201H1195.6M1191.1 190.6V201" stroke="#4a7dbb" stroke-width="1.7" fill="none"/><rect x="1258" y="182" width="13" height="13" fill="#4e7fba"/><rect x="1271" y="182" width="13" height="13" fill="#e8849a"/><rect x="1258" y="195" width="13" height="13" fill="#74a690"/><rect x="1271" y="195" width="13" height="13" fill="#ecc078"/><rect x="1085" y="248" width="9" height="25" fill="#eabf78"/><path d="M1085 254H1094M1085 260H1094M1085 266H1094" stroke="#c89a4e" stroke-width=".8"/><rect x="1098.8" y="248.4" width="12.8" height="24.4" fill="#fff" stroke="#8d8d8d" stroke-width="0.9"/><path d="M1105.20 248.4V272.8M1098.8 253.28H1111.6M1098.8 258.16H1111.6M1098.8 263.04H1111.6M1098.8 267.92H1111.6" stroke="#8d8d8d" stroke-width="0.9" fill="none"/><rect x="1098.4" y="248" width="13.6" height="5.4" fill="#7c7c7c"/><path d="M1099.8 274.8L1101 270.8L1108.6 263.2L1113 267.6L1105.4 274Z" fill="#eabf78"/><path d="M1099.8 274.8L1101 270.8L1103.6 273.6Z" fill="#9b8a6a"/><rect x="1172.4" y="248.4" width="25.4" height="24.6" fill="#fff" stroke="#9a9a9a" stroke-width="0.9"/><path d="M1178.75 248.4V273.0M1185.10 248.4V273.0M1191.45 248.4V273.0M1172.4 253.32H1197.8000000000002M1172.4 258.24H1197.8000000000002M1172.4 263.16H1197.8000000000002M1172.4 268.08H1197.8000000000002" stroke="#9a9a9a" stroke-width="0.9" fill="none"/><rect x="1172" y="248" width="26.2" height="5.6" fill="#7c7c7c"/><rect x="1178.2" y="253.6" width="6.6" height="19.4" fill="#fff" stroke="#e8849a" stroke-width="1"/><path d="M1178.2 258.45H1184.8M1178.2 263.30H1184.8M1178.2 268.15H1184.8" stroke="#e8849a" stroke-width="1" fill="none"/><rect x="1177.8" y="248" width="7.6" height="5.6" fill="#e8849a"/><rect x="1185.6" y="261" width="15" height="15.5" fill="#f4f4f4"/><path d="M1187.4 263.2L1198.6 274.4M1198.6 263.2L1187.4 274.4" stroke="#e8849a" stroke-width="2.6"/><rect x="1258.4" y="248.6" width="25.6" height="5" fill="#fff" stroke="#e8849a" stroke-width="0.9"/><path d="M1264.80 248.6V253.6M1271.20 248.6V253.6M1277.60 248.6V253.6" stroke="#e8849a" stroke-width="0.9" fill="none"/><rect x="1258.4" y="258.2" width="25.6" height="15.2" fill="#fff" stroke="#8d8d8d" stroke-width="0.9"/><path d="M1264.80 258.2V273.4M1271.20 258.2V273.4M1277.60 258.2V273.4M1258.4 263.27H1284.0M1258.4 268.33H1284.0" stroke="#8d8d8d" stroke-width="0.9" fill="none"/><rect x="1271.6" y="261" width="15" height="15.5" fill="#f4f4f4"/><path d="M1273.4 263.2L1284.6 274.4M1284.6 263.2L1273.4 274.4" stroke="#e8849a" stroke-width="2.6"/><path d="M1083 314.5H1108.5Q1111.5 314.5 1109.5 317L1100.5 328V336L1096 336.5L1094 334.5V328L1084.5 317Q1082.5 314.5 1085 314.5Z" fill="#fff" stroke="#7d7d7d" stroke-width="1"/><rect x="1097" y="325.5" width="18" height="16" fill="#f4f4f4"/><path d="M1099 331.2H1113M1099 336.2H1113M1109.6 327L1102.6 340.6" stroke="#4a7dbb" stroke-width="1.6" fill="none"/><rect x="1170.6" y="315.6" width="29" height="23" fill="#fff" stroke="#8d8d8d" stroke-width="1"/><text x="1185.2" y="336" text-anchor="middle" font-family="Liberation Sans,sans-serif" font-size="24" fill="#4a7dbb">?</text><rect x="1261.4" y="313.4" width="19.4" height="19.2" fill="#fff" stroke="#8d8d8d" stroke-width="1"/><path d="M1265 316.2H1277.4M1264.4 320V329.4" stroke="#7a7a7a" stroke-width="2"/><rect x="1263.4" y="315.2" width="2" height="2" fill="#7a7a7a"/><path d="M1267 327.8C1272.6 327.8 1276.4 324.4 1276.4 319.4" fill="none" stroke="#4a7dbb" stroke-width="1"/><path d="M1269.4 325.4L1266.8 327.8L1269.4 330.2M1274 321.6L1276.4 319L1278.8 321.6" fill="none" stroke="#4a7dbb" stroke-width="1"/><rect x="1086.5" y="383.5" width="12" height="18" fill="#f4f4f4" stroke="#9a9a9a"/><path d="M1088 387H1097M1088 390.5H1097M1088 394H1097M1088 397.5H1097" stroke="#6f97c8"/><rect x="1101.2" y="379.6" width="10.6" height="11" fill="#ececec" stroke="#9a9a9a" stroke-width=".9" stroke-dasharray="3.2 2.2"/><path d="M1102 385.1H1112M1106.4 380.70000000000005L1102 385.1L1106.4 389.5" fill="none" stroke="#4a7dbb" stroke-width="1.5"/><rect x="1101.2" y="395.4" width="10.6" height="11" fill="#ececec" stroke="#9a9a9a" stroke-width=".9" stroke-dasharray="3.2 2.2"/><path d="M1102 400.9H1112M1106.4 396.5L1102 400.9L1106.4 405.29999999999995" fill="none" stroke="#4a7dbb" stroke-width="1.5"/><rect x="1175.5" y="379.9" width="19" height="18.6" fill="#fff" stroke="#8d8d8d"/><rect x="1175" y="379.4" width="20" height="3.4" fill="#7c7c7c"/><path d="M1175.5 386.4H1194.5M1175.5 393.6H1194.5M1181.8 382.6V386.4M1188.2 382.6V386.4M1181.8 393.6V398.5M1188.2 393.6V398.5" stroke="#8d8d8d" fill="none"/><path d="M1176.2 390H1182.4M1187.6 390H1193.8M1178.8 387.4L1176.2 390L1178.8 392.6M1191.2 387.4L1193.8 390L1191.2 392.6" fill="none" stroke="#4a7dbb" stroke-width="1"/><path d="M1264 381.6H1275.4A4.7 4.7 0 0 1 1275.4 391H1266.4A2.4 2.4 0 0 0 1266.4 395.8H1278" fill="none" stroke="#4a7dbb" stroke-width="1.1"/><circle cx="1263.8" cy="381.6" r="1.9" fill="#4a7dbb"/><circle cx="1278.4" cy="395.8" r="1.9" fill="#4a7dbb"/><path d="M1078 446.4H1108V451.4H1078ZM1088 446.4V451.4M1098 446.4V451.4" fill="#fff" stroke="#4a7dbb" stroke-width="1"/><path d="M1078 451.4V465H1094V451.4M1078 456H1094M1078 460.4H1094M1086 451.4V465" fill="none" stroke="#8d8d8d" stroke-width=".9"/><rect x="1096" y="452" width="16" height="16" fill="#f4f4f4"/><path d="M1098.4 458.4A5.4 5.4 0 0 1 1108.2 456.2" fill="none" stroke="#4a7dbb" stroke-width="2.2"/><path d="M1109.8 452.4V458H1104.2Z" fill="#4a7dbb"/><path d="M1109.4 460.6A5.4 5.4 0 0 1 1099.6 462.8" fill="none" stroke="#4a7dbb" stroke-width="2.2"/><path d="M1098 466.6V461H1103.6Z" fill="#4a7dbb"/><text x="1185.2" y="457.4" text-anchor="middle" font-family="Liberation Sans,sans-serif" font-size="16.4" fill="#8d8d8d">AB</text><rect x="1172.4" y="461.4" width="25.4" height="10" fill="#fff" stroke="#8d8d8d" stroke-width=".9"/><text x="1185.2" y="470.2" text-anchor="middle" font-family="Liberation Sans,sans-serif" font-size="9.6" font-weight="bold" fill="#4a7dbb" letter-spacing=".5">1 2</text><rect x="1268.2" y="445.6" width="5" height="3.8" fill="#fff" stroke="#9a9a9a" stroke-width=".7"/><rect x="1275" y="445.6" width="5" height="3.8" fill="#fff" stroke="#9a9a9a" stroke-width=".7"/><rect x="1268.2" y="452.8" width="5" height="3.8" fill="#fff" stroke="#9a9a9a" stroke-width=".7"/><rect x="1275" y="452.8" width="5" height="3.8" fill="#fff" stroke="#9a9a9a" stroke-width=".7"/><rect x="1268.2" y="460.4" width="5" height="3.8" fill="#fff" stroke="#9a9a9a" stroke-width=".7"/><rect x="1275" y="460.4" width="5" height="3.8" fill="#fff" stroke="#9a9a9a" stroke-width=".7"/><path d="M1262.4 449.4V446.4H1265.6" fill="none" stroke="#7a7a7a" stroke-width="1.6"/><path d="M1261 454.8H1266.6M1263.8 452V457.6M1261 462.4H1266.6M1263.8 459.6V465.2" stroke="#5aa585" stroke-width="1.5"/><rect x="1269.8" y="454" width="1.8" height="1.6" fill="#e8849a"/><rect x="1269.8" y="461.6" width="1.8" height="1.4" fill="#e8849a"/><rect x="1276.6" y="461.6" width="1.8" height="1.4" fill="#e8849a"/><rect x="1075.4" y="513.6" width="33" height="17.2" fill="#fff" stroke="#8d8d8d" stroke-width="0.9"/><path d="M1082.00 513.6V530.8000000000001M1088.60 513.6V530.8000000000001M1095.20 513.6V530.8000000000001M1101.80 513.6V530.8000000000001M1075.4 517.90H1108.4M1075.4 522.20H1108.4M1075.4 526.50H1108.4" stroke="#8d8d8d" stroke-width="0.9" fill="none"/><rect x="1075" y="511" width="30" height="2" fill="#4a7dbb"/><rect x="1105.6" y="511.4" width="3.2" height="3.2" fill="#7a7a7a"/><rect x="1177.4" y="511.4" width="15.2" height="19.4" fill="#fff" stroke="#8d8d8d" stroke-width=".9"/><path d="M1179.6 514.6H1183.8M1186 514.6H1190.4" stroke="#4a7dbb" stroke-width="1"/><path d="M1179.6 518H1183.8M1186 518H1190.4M1179.6 521.2H1183.8M1186 521.2H1190.4M1179.6 524.4H1183.8M1186 524.4H1190.4M1179.6 527.6H1183.8M1186 527.6H1190.4" stroke="#9a9a9a" stroke-width=".9"/><path d="M1263.2 511.4H1274.4L1278.8 515.8V530.4H1263.2Z" fill="#fff" stroke="#8d8d8d" stroke-width=".9"/><path d="M1274.4 511.4V515.8H1278.8" fill="none" stroke="#8d8d8d" stroke-width=".8"/><path d="M1265.6 515H1271.6M1265.6 523.4H1270.6M1265.6 526.4H1268" stroke="#9a9a9a" stroke-width=".9"/><path d="M1266.4 518H1275.4M1267.4 521H1272.4M1265.6 527.6H1267" stroke="#e8684a" stroke-width=".9"/><path d="M1268.2 526.4L1272.4 530.6L1281.4 520.6" fill="none" stroke="#4a7dbb" stroke-width="2"/></svg>
<div style="left:290px;top:104px;width:802px;height:631px;background:#f0f0f0;border:1px solid #5f5f5f;box-shadow:0 3px 20px 1px rgba(0,0,0,.33)"></div>
<div style="left:291px;top:105px;width:800px;height:30px;background:#fff"></div>
<svg style="left:299px;top:111px" width="16" height="16" viewBox="0 0 16 16"><path d="M8 1.4L15.7 5V11.3L8 15.9L0.3 11.3V5Z" fill="#f29a14"/><path d="M8 1.4L15.7 5L8 8.9L0.3 5Z" fill="#f7b51d"/><path d="M8 8.9L15.7 5V11.3L8 15.9Z" fill="#f5a216"/><path d="M8 8.9L0.3 5V11.3L8 15.9Z" fill="#ee8e14"/><path d="M3.8 2.5V4.7A4.2 2 0 0 0 12.2 4.7V2.5Z" fill="#e9940f"/><ellipse cx="8" cy="2.5" rx="4.2" ry="2" fill="#f8bb22"/></svg>
<span class="t" style="left:319.5px;top:112px;font-size:12px;letter-spacing:.3px">数据-行筛选</span>
<span class="t" style="left:1020.5px;top:111px;font-size:13.5px;color:#111;transform:scaleX(.85);transform-origin:0 0">?</span>
<svg style="left:1062px;top:113px" width="12" height="12" viewBox="0 0 12 12"><path d="M1 1L11 11M11 1L1 11" stroke="#111" stroke-width="1.1" fill="none"/></svg>
<div style="left:302px;top:148px;width:14px;height:14px;border-radius:7px;border:1px solid #a3a3a3;background:radial-gradient(circle at 50% 40%,#fff 55%,#ececec)"></div>
<span class="t" style="left:321.7px;top:147.8px;font-size:12px">不筛选</span>
<div style="left:302px;top:172px;width:14px;height:14px;border-radius:7px;border:1px solid #a3a3a3;background:radial-gradient(circle at 50% 40%,#fff 55%,#ececec)"></div>
<div style="left:306px;top:176px;width:6px;height:6px;border-radius:3px;background:#3a3a3a"></div>
<span class="t" style="left:321.7px;top:171.8px;font-size:12px">简单</span>
<div style="left:302px;top:200px;width:14px;height:14px;border-radius:7px;border:1px solid #a3a3a3;background:radial-gradient(circle at 50% 40%,#fff 55%,#ececec)"></div>
<span class="t" style="left:321.7px;top:199.8px;font-size:12px">随机</span>
<div style="left:302px;top:228px;width:14px;height:14px;border-radius:7px;border:1px solid #a3a3a3;background:radial-gradient(circle at 50% 40%,#fff 55%,#ececec)"></div>
<span class="t" style="left:321.7px;top:227.8px;font-size:12px">列</span>
<div style="left:302px;top:256px;width:14px;height:14px;border-radius:7px;border:1px solid #a3a3a3;background:radial-gradient(circle at 50% 40%,#fff 55%,#ececec)"></div>
<span class="t" style="left:321.7px;top:255.8px;font-size:12px">数据类型</span>
<span class="t" style="left:381px;top:174px;">从</span>
<div style="left:399px;top:171px;width:84px;height:20px;border:1px solid #adadad;border-radius:3px;background:#fff"></div>
<div style="left:468px;top:172px;width:14px;height:18px;border-left:1px solid #c6c6c6;background:linear-gradient(#fbfbfb,#ececec);border-radius:0 2px 2px 0"></div>
<svg style="left:471px;top:174.5px" width="8" height="13" viewBox="0 0 8 13"><path d="M0.5 5L4 1.2L7.5 5Z" fill="#5a5a5a"/><path d="M0.5 8L4 11.8L7.5 8Z" fill="#b4b4b4"/></svg>
<span class="t d" style="left:404px;top:172.8px;">1</span>
<span class="t" style="left:488.5px;top:174px;">到</span>
<div style="left:507px;top:171px;width:84px;height:20px;border:1px solid #3d9be9;border-radius:3px;background:#fff;box-shadow:0 0 1px #7fbdf0"></div>
<div style="left:576px;top:172px;width:14px;height:18px;border-left:1px solid #c6c6c6;background:linear-gradient(#fbfbfb,#ececec);border-radius:0 2px 2px 0"></div>
<svg style="left:579px;top:174.5px" width="8" height="13" viewBox="0 0 8 13"><path d="M0.5 5L4 1.2L7.5 5Z" fill="#5a5a5a"/><path d="M0.5 8L4 11.8L7.5 8Z" fill="#5a5a5a"/></svg>
<span class="t d" style="left:512px;top:172.8px;">5</span>
<div style="left:519px;top:175px;width:1px;height:12px;background:#000"></div>
<span class="t" style="left:596.5px;top:174px;">行</span>
<div class="cmb" style="left:381px;top:198px;width:113px;height:22px;"></div>
<span class="t" style="left:385px;top:201.5px;font-size:12px">按比例随机抽样</span>
<svg style="left:479px;top:207.0px" width="8" height="5" viewBox="0 0 8 5"><path d="M0 0.3H8L4 4.6Z" fill="#4d4d4d"/></svg>
<div style="left:500px;top:199px;width:48px;height:20px;border:1px solid #adadad;border-radius:3px;background:#fff"></div>
<div style="left:533px;top:200px;width:14px;height:18px;border-left:1px solid #c6c6c6;background:linear-gradient(#fbfbfb,#ececec);border-radius:0 2px 2px 0"></div>
<svg style="left:536px;top:202.5px" width="8" height="13" viewBox="0 0 8 13"><path d="M0.5 5L4 1.2L7.5 5Z" fill="#5a5a5a"/><path d="M0.5 8L4 11.8L7.5 8Z" fill="#5a5a5a"/></svg>
<span class="t d" style="left:505px;top:200.8px;">10</span>
<span class="t mo" style="left:554px;top:201.5px;">%</span>
<div class="cmb" style="left:566px;top:198px;width:89px;height:22px;"></div>
<span class="t" style="left:570px;top:201.5px;font-size:12px">无放回抽样</span>
<svg style="left:640px;top:207.0px" width="8" height="5" viewBox="0 0 8 5"><path d="M0 0.3H8L4 4.6Z" fill="#4d4d4d"/></svg>
<span class="t" style="left:660.5px;top:201.5px;">随机种子</span>
<div style="left:715px;top:199px;width:84px;height:20px;border:1px solid #adadad;border-radius:3px;background:#fff"></div>
<div style="left:784px;top:200px;width:14px;height:18px;border-left:1px solid #c6c6c6;background:linear-gradient(#fbfbfb,#ececec);border-radius:0 2px 2px 0"></div>
<svg style="left:787px;top:202.5px" width="8" height="13" viewBox="0 0 8 13"><path d="M0.5 5L4 1.2L7.5 5Z" fill="#5a5a5a"/><path d="M0.5 8L4 11.8L7.5 8Z" fill="#5a5a5a"/></svg>
<span class="t d" style="left:720px;top:200.8px;">12345</span>
<div class="cmb" style="left:381px;top:226px;width:77px;height:22px;"></div>
<span class="t" style="left:385px;top:229.5px;font-size:12px">变量列表</span>
<svg style="left:443px;top:235.0px" width="8" height="5" viewBox="0 0 8 5"><path d="M0 0.3H8L4 4.6Z" fill="#4d4d4d"/></svg>
<div class="cmb" style="left:464px;top:226px;width:77px;height:22px;"></div>
<span class="t" style="left:468px;top:229.5px;font-size:12px">模糊匹配</span>
<svg style="left:526px;top:235.0px" width="8" height="5" viewBox="0 0 8 5"><path d="M0 0.3H8L4 4.6Z" fill="#4d4d4d"/></svg>
<div class="inp" style="left:547px;top:226px;width:200px;height:22px;"></div>
<div class="cmb" style="left:381px;top:254px;width:71px;height:22px;"></div>
<span class="t" style="left:385px;top:257.5px;font-size:12px">全部</span>
<svg style="left:437px;top:263.0px" width="8" height="5" viewBox="0 0 8 5"><path d="M0 0.3H8L4 4.6Z" fill="#4d4d4d"/></svg>
<div style="left:302px;top:282px;width:778px;height:398px;background:#fff;border:1px solid #b4b4b4"></div>
<div style="left:303px;top:283px;width:776px;height:20px;background:#f0f0f0"></div>
<div style="left:303px;top:283px;width:511px;height:20px;background:linear-gradient(#fff,#f7f7f7 60%,#ededed)"></div>
<div style="left:303px;top:303px;width:776px;height:1px;background:#b9b9b9"></div>
<div style="left:303px;top:304px;width:11px;height:375px;background:#f0f0f0"></div>
<div style="left:303px;top:304px;width:11px;height:150px;background:linear-gradient(90deg,#fdfdfd,#efefef)"></div>
<div style="left:314px;top:304px;width:1px;height:150px;background:#b9b9b9"></div>
<div style="left:413px;top:283px;width:1px;height:20px;background:#c8c8c8"></div>
<span class="t mo" style="left:314px;top:287px;width:100px;text-align:center">Name</span>
<div style="left:513px;top:283px;width:1px;height:20px;background:#c8c8c8"></div>
<span class="t mo" style="left:414px;top:287px;width:100px;text-align:center">Sex</span>
<div style="left:613px;top:283px;width:1px;height:20px;background:#c8c8c8"></div>
<span class="t mo" style="left:514px;top:287px;width:100px;text-align:center">Age</span>
<div style="left:713px;top:283px;width:1px;height:20px;background:#c8c8c8"></div>
<span class="t mo" style="left:614px;top:287px;width:100px;text-align:center">Height</span>
<div style="left:813px;top:283px;width:1px;height:20px;background:#c8c8c8"></div>
<span class="t mo" style="left:714px;top:287px;width:100px;text-align:center">Weight</span>
<div style="left:313px;top:283px;width:1px;height:20px;background:#d4d4d4"></div>
<div style="left:303px;top:333px;width:511px;height:1px;background:#d0d0d0"></div>
<div style="left:303px;top:333px;width:12px;height:1px;background:#b9b9b9"></div>
<span class="t d" style="left:305px;top:311px;">1</span>
<span class="t se" style="left:317px;top:310.5px;">Alfred</span>
<span class="t se" style="left:418px;top:310.5px;">M</span>
<span class="t se" style="left:518px;top:310.5px;">14</span>
<span class="t se" style="left:618px;top:310.5px;">69.0</span>
<span class="t se" style="left:718px;top:310.5px;">112.5</span>
<div style="left:303px;top:363px;width:511px;height:1px;background:#d0d0d0"></div>
<div style="left:303px;top:363px;width:12px;height:1px;background:#b9b9b9"></div>
<span class="t d" style="left:305px;top:341px;">2</span>
<span class="t se" style="left:317px;top:340.5px;">Alice</span>
<span class="t se" style="left:418px;top:340.5px;">F</span>
<span class="t se" style="left:518px;top:340.5px;">13</span>
<span class="t se" style="left:618px;top:340.5px;">56.5</span>
<span class="t se" style="left:718px;top:340.5px;">84.0</span>
<div style="left:303px;top:393px;width:511px;height:1px;background:#d0d0d0"></div>
<div style="left:303px;top:393px;width:12px;height:1px;background:#b9b9b9"></div>
<span class="t d" style="left:305px;top:371px;">3</span>
<span class="t se" style="left:317px;top:370.5px;">Barbara</span>
<span class="t se" style="left:418px;top:370.5px;">F</span>
<span class="t se" style="left:518px;top:370.5px;">13</span>
<span class="t se" style="left:618px;top:370.5px;">65.3</span>
<span class="t se" style="left:718px;top:370.5px;">98.0</span>
<div style="left:303px;top:423px;width:511px;height:1px;background:#d0d0d0"></div>
<div style="left:303px;top:423px;width:12px;height:1px;background:#b9b9b9"></div>
<span class="t d" style="left:305px;top:401px;">4</span>
<span class="t se" style="left:317px;top:400.5px;">Carol</span>
<span class="t se" style="left:418px;top:400.5px;">F</span>
<span class="t se" style="left:518px;top:400.5px;">14</span>
<span class="t se" style="left:618px;top:400.5px;">62.8</span>
<span class="t se" style="left:718px;top:400.5px;">102.5</span>
<div style="left:303px;top:453px;width:511px;height:1px;background:#d0d0d0"></div>
<div style="left:303px;top:453px;width:12px;height:1px;background:#b9b9b9"></div>
<span class="t d" style="left:305px;top:431px;">5</span>
<span class="t se" style="left:317px;top:430.5px;">Henry</span>
<span class="t se" style="left:418px;top:430.5px;">M</span>
<span class="t se" style="left:518px;top:430.5px;">14</span>
<span class="t se" style="left:618px;top:430.5px;">63.5</span>
<span class="t se" style="left:718px;top:430.5px;">102.5</span>
<div style="left:413px;top:304px;width:1px;height:150px;background:#d0d0d0"></div>
<div style="left:513px;top:304px;width:1px;height:150px;background:#d0d0d0"></div>
<div style="left:613px;top:304px;width:1px;height:150px;background:#d0d0d0"></div>
<div style="left:713px;top:304px;width:1px;height:150px;background:#d0d0d0"></div>
<div style="left:813px;top:304px;width:1px;height:150px;background:#d0d0d0"></div>
<div class="btn" style="left:311px;top:695px;width:80px;height:20px;border-color:#3d9be9;box-shadow:inset 0 0 0 1px #bfe0fa"></div>
<span class="t" style="left:311px;top:697.8px;width:80px;text-align:center;font-size:12px">帮助</span>
<div class="btn" style="left:819px;top:695px;width:80px;height:20px;"></div>
<span class="t" style="left:819px;top:697.8px;width:80px;text-align:center;font-size:12px">确定</span>
<div class="btn" style="left:905px;top:695px;width:80px;height:20px;"></div>
<span class="t" style="left:905px;top:697.8px;width:80px;text-align:center;font-size:12px">保存</span>
<div class="btn" style="left:991px;top:695px;width:80px;height:20px;"></div>
<span class="t" style="left:991px;top:697.8px;width:80px;text-align:center;font-size:12px">取消</span>
</body></html>
